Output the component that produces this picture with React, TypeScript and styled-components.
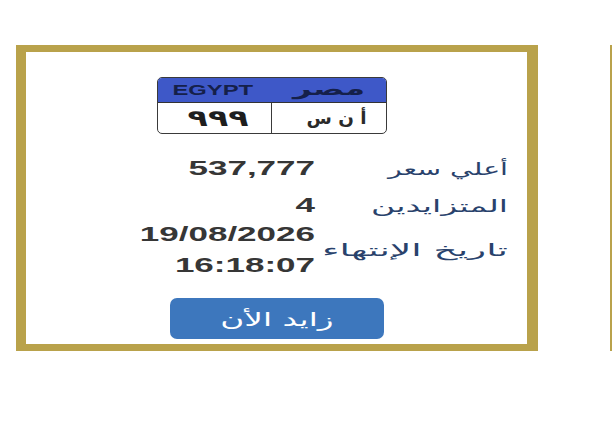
import styled, { createGlobalStyle } from "styled-components";

const GlobalStyle = createGlobalStyle`
  body {
    margin: 0;
    background: #ffffff;
    font-family: "Liberation Sans", "DejaVu Sans", sans-serif;
  }
`;

type Auction = {
  letters: string;
  number: string;
  price: string;
  bidders: string;
  date: string;
  time: string;
};

const auction: Auction = {
  letters: "أ ن س",
  number: "٩٩٩",
  price: "537,777",
  bidders: "4",
  date: "19/08/2026",
  time: "16:18:07",
};

const PlateCard = ({ item }: { item: Auction }) => {
  return (
    <Card>
      <Plate>
        <PlateHeader>
          <Country>EGYPT</Country>
          <CountryAr>مصر</CountryAr>
        </PlateHeader>
        <PlateBody>
          <PlateNumber>
            <NumberText>{item.number}</NumberText>
          </PlateNumber>
          <PlateLetters>{item.letters}</PlateLetters>
        </PlateBody>
      </Plate>

      <Info>
        <Label $stretch={1.67}>أعلي سعر</Label>
        <Value>{item.price}</Value>
        <Label $stretch={1.95}>المتزايدين</Label>
        <Value>{item.bidders}</Value>
        <Label $stretch={2.2}>تاريخ الإنتهاء</Label>
        <Value>
          {item.date}
          <br />
          {item.time}
        </Value>
      </Info>

      <BidButton>
        <BidText>زايد الأن</BidText>
      </BidButton>
    </Card>
  );
};

export default function App() {
  return (
    <>
      <GlobalStyle />
      <Page>
        <PlateCard item={auction} />
        {/* next card in the carousel, only its edge shows */}
        <Card />
      </Page>
    </>
  );
}

const Page = styled.main`
  box-sizing: border-box;
  width: 612px;
  height: 430px;
  overflow: hidden;
  display: flex;
  gap: 72px;
  padding: 45px 0 0 16px;
`;

const Card = styled.section`
  box-sizing: border-box;
  flex-shrink: 0;
  width: 522px;
  height: 306px;
  border-style: solid;
  border-color: #b9a24b;
  border-width: 7px 11px 7px 10px;
  background: #ffffff;
  display: flex;
  flex-direction: column;
  align-items: center;
  padding: 25px 0 5px;
`;

const Plate = styled.div`
  box-sizing: border-box;
  width: 230px;
  height: 57px;
  margin-right: 9px;
  border: 1.5px solid #3a3a3a;
  border-radius: 5px;
  overflow: hidden;
  display: grid;
  grid-template-rows: 25px 1fr;
`;

const PlateHeader = styled.div`
  display: grid;
  grid-template-columns: 1fr 1fr;
  align-items: center;
  background: #3e58c8;
  border-bottom: 1.5px solid #333333;
`;

const Country = styled.span`
  justify-self: center;
  margin-left: -4px;
  font: 700 14px "Liberation Sans", sans-serif;
  color: #15204a;
  transform: scaleX(1.7);
`;

const CountryAr = styled.span`
  justify-self: end;
  margin-right: 21px;
  margin-top: -3px;
  font: 700 18px "DejaVu Sans", sans-serif;
  color: #15204a;
  transform: scaleX(1.8);
  transform-origin: right center;
`;

const PlateBody = styled.div`
  display: grid;
  grid-template-columns: 1fr 1fr;
  align-items: center;
`;

const PlateNumber = styled.div`
  height: 100%;
  display: flex;
  align-items: center;
  justify-content: center;
  padding-left: 8px;
  border-right: 1.5px solid #3a3a3a;
`;

const NumberText = styled.span`
  font: 700 23px "DejaVu Sans", sans-serif;
  color: #1e1e1e;
  transform: scaleX(1.45);
`;

const PlateLetters = styled.span`
  justify-self: end;
  margin-right: 19px;
  font: 700 17px "DejaVu Sans", sans-serif;
  color: #2a2a2a;
  direction: rtl;
  transform: scaleX(1.08);
  transform-origin: right center;
`;

const Info = styled.div`
  align-self: flex-end;
  margin: 11px 19px 0 0;
  direction: rtl;
  display: grid;
  grid-template-columns: 185px 177px;
  grid-template-rows: 47px 27px 62px;
  column-gap: 8px;
  align-items: center;
`;

const Label = styled.span<{ $stretch: number }>`
  font: 400 17px "DejaVu Sans", sans-serif;
  color: #29426c;
  white-space: nowrap;
  transform: scaleX(${(p) => p.$stretch});
  transform-origin: right center;
`;

const Value = styled.div`
  direction: ltr;
  text-align: right;
  font: 700 20px "Liberation Sans", sans-serif;
  line-height: 31px;
  color: #363636;
  white-space: nowrap;
  transform: scaleX(1.75);
  transform-origin: right center;
`;

const BidButton = styled.button`
  width: 214px;
  height: 41px;
  margin-top: 17px;
  border: none;
  border-radius: 7px;
  background: #3d77bd;
  color: #ffffff;
  cursor: pointer;
  display: flex;
  align-items: center;
  justify-content: center;
`;

const BidText = styled.span`
  font: 400 19px "DejaVu Sans", sans-serif;
  transform: scaleX(1.72);
`;
